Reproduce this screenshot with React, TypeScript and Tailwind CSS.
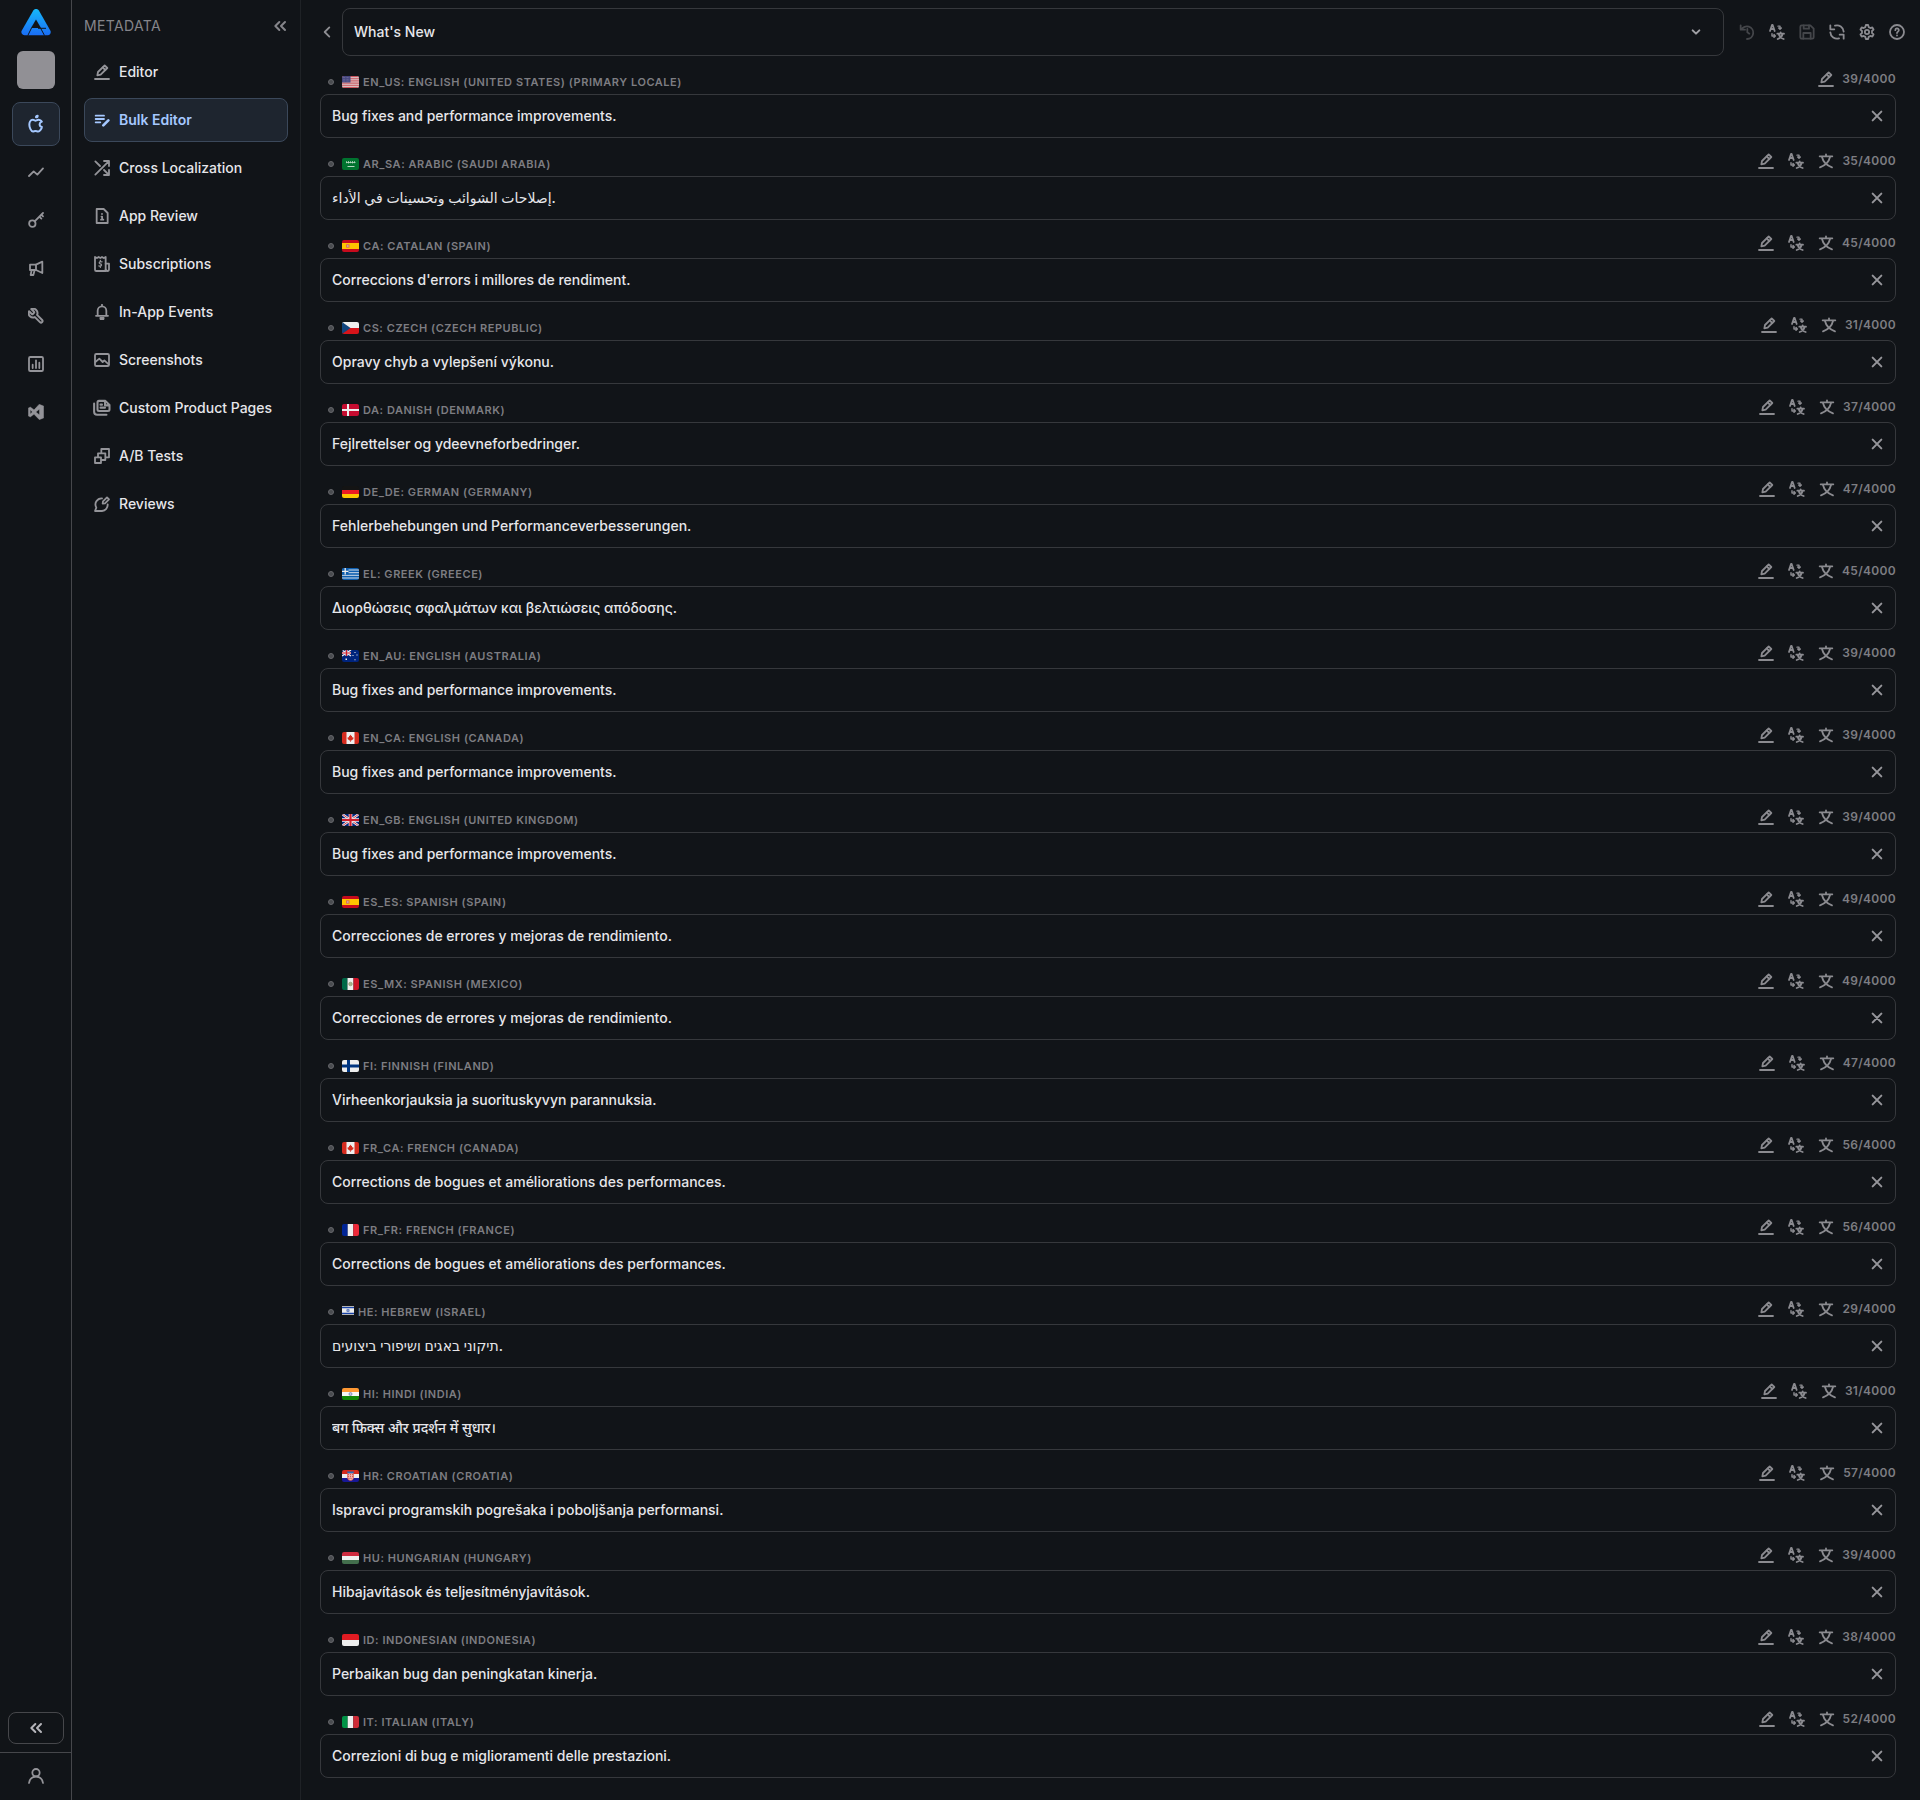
import { useState, type ReactNode } from "react";
import { TbBrandApple } from "react-icons/tb";

function Icon({ children, className = "size-4" }: { children: ReactNode; className?: string }) {
  return (
    <svg
      viewBox="0 0 24 24"
      fill="none"
      stroke="currentColor"
      strokeWidth="2.7"
      strokeLinecap="round"
      strokeLinejoin="round"
      className={className}
      aria-hidden="true"
    >
      {children}
    </svg>
  );
}

const PenIcon = () => (
  <Icon>
    <path d="M5 17l1-5L16 2l4 4L10 16z" />
    <path d="M13 5l4 4" />
    <path d="M1.5 22.5h21" />
  </Icon>
);

const TranslateAllIcon = () => (
  <Icon>
    <path d="M1.5 10.5L4.5 1.5h1L8.5 10.5M2.8 7.5h4.5" />
    <path d="M13.5 3.2h3V7M14.5 6l2 1.8 2-1.8" strokeWidth="2.2" />
    <path d="M4.5 14.5V18H9M7.5 15.8L9.5 18l-2 2" strokeWidth="2.2" />
    <path d="M12.5 14.5h10M17.5 12.5v2M20.5 15c-1 3.5-4 6.5-7.5 7.5M14.5 15c1 3.5 4 6.5 7.5 7.5" />
  </Icon>
);

const TranslateIcon = () => (
  <Icon>
    <path d="M2.5 5h19M12 2v3" />
    <path d="M18 6c-1.5 7-7 12.5-15 15.5M6 6c1.5 7 7 12.5 15 15.5" />
  </Icon>
);

const CloseIcon = () => (
  <Icon>
    <path d="M5.5 5.5l13 13M18.5 5.5l-13 13" strokeWidth="3" />
  </Icon>
);

const DoubleChevronLeft = () => (
  <Icon>
    <path d="M11 6l-6 6 6 6M19.5 6l-6 6 6 6" strokeWidth="3" />
  </Icon>
);

function Logo() {
  return (
    <svg viewBox="0 0 30 27" className="h-[27px] w-[30px]" aria-hidden="true">
      <defs>
        <linearGradient id="logo" x1="0" y1="0" x2="0" y2="1">
          <stop offset="0" stopColor="#16b9fb" />
          <stop offset="1" stopColor="#1a6df5" />
        </linearGradient>
      </defs>
      <path
        d="M12.3 1.5a3.3 3.3 0 0 1 5.6 0L29.3 21.4A3.3 3.3 0 0 1 26.5 26.3H3.5A3.3 3.3 0 0 1 .8 21.4z"
        fill="url(#logo)"
      />
      <path d="M15 10.5L10 19h10z" fill="#111418" />
      <path d="M10.5 19L6.8 26.5M19.5 19l4 7.500M17 19.300h8" stroke="#111418" strokeWidth="1" />
    </svg>
  );
}

const railItems = [
  {
    label: "Analytics",
    icon: <path d="M1.5 18l7-7 5.5 5L22.5 6.5" />,
  },
  {
    label: "Keywords",
    icon: (
      <>
        <circle cx="6.5" cy="17.5" r="4.8" />
        <path d="M10 14L22.5 1.5M17 7l3 3M20 4l2.5 2.5" />
      </>
    ),
  },
  {
    label: "Campaigns",
    icon: (
      <>
        <path d="M3 7h9l9.5-4.500v17L12 15H3z" />
        <path d="M12 7v8M5.5 15L4 22.5h4L10 15" />
      </>
    ),
  },
  {
    label: "Tools",
    icon: (
      <path
        transform="matrix(-1.1 0 0 1.1 25.2 -1.2)"
        d="M14.7 6.3a1 1 0 0 0 0 1.4l1.6 1.6a1 1 0 0 0 1.4 0l3.77-3.77a6 6 0 0 1-7.94 7.94l-6.91 6.91a2.12 2.12 0 0 1-3-3l6.91-6.91a6 6 0 0 1 7.94-7.94l-3.76 3.76z"
      />
    ),
  },
  {
    label: "Reports",
    icon: (
      <>
        <rect x="1.5" y="1.5" width="21" height="21" rx="2" />
        <path d="M7 18v-5M12 18V6.5M17 18v-8" />
      </>
    ),
  },
  {
    label: "Extensions",
    icon: (
      <path
        d="M17 .5L23.5 3v18L17 23.5 9 15.5 3.5 19.5.5 18V6l3-1.5L9 8.5zM17 8l-5 4 5 4zM3.5 9v6L6.3 12z"
        fill="currentColor"
        fillRule="evenodd"
        strokeWidth=".5"
      />
    ),
  },
];

const navItems = [
  { label: "Editor", icon: <PenIcon /> },
  {
    label: "Bulk Editor",
    active: true,
    icon: (
      <Icon>
        <path d="M2.5 5.5H15M2.5 10.5H15M2.5 15.5h7" />
        <path d="M14 20l7.5-7.5" strokeWidth="4" />
      </Icon>
    ),
  },
  {
    label: "Cross Localization",
    icon: (
      <Icon>
        <path d="M2 2l7 7M2 22L22 2M15 15l7 7M15 1.5h7.500V9M22.5 15v7.500H15" />
      </Icon>
    ),
  },
  {
    label: "App Review",
    icon: (
      <Icon>
        <path d="M4 1.5h10.500l6 6v15H4z" />
        <path d="M12 8.800v.2M11.200 12.800h1v4.500M10.500 17.500h3.500" />
      </Icon>
    ),
  },
  {
    label: "Subscriptions",
    icon: (
      <Icon>
        <path d="M1.5 1.5l3 1.5L7 1.5 9.5 3 12 1.5 14.5 3l3-1.500v21h-14a2 2 0 0 1-2-2z" />
        <path d="M17.5 11.5h5V20a2.5 2.5 0 0 1-5 0" />
        <path d="M12 8.800c-4-1.200-5.500 2.200-2.500 3s2 4.200-2.200 3M9.600 6.800v1.500M9.600 15.500v1.500" strokeWidth="2" />
      </Icon>
    ),
  },
  {
    label: "In-App Events",
    icon: (
      <Icon>
        <path d="M12 1v2M5.5 17.500V10a6.500 6.500 0 0 1 13 0v7.500M3 17.800h18" />
        <path d="M9.500 21a2.500 2.500 0 0 0 5 0z" fill="currentColor" />
      </Icon>
    ),
  },
  {
    label: "Screenshots",
    icon: (
      <Icon>
        <rect x="1.5" y="3" width="21" height="18" rx="2" />
        <path d="M2 15l6-5 5 5 2.500-2.500 6.500 6" />
      </Icon>
    ),
  },
  {
    label: "Custom Product Pages",
    icon: (
      <Icon className="size-[18px]">
        <path d="M8 2.500h8.500l5.500 5.500v6a2 2 0 0 1-2 2H8a2 2 0 0 1-2-2V4.500a2 2 0 0 1 2-2zM16 3v5.500h5.500" />
        <path d="M10 7.500h2M10 11.500h6M1.500 6v11a4 4 0 0 0 4 4H18" />
      </Icon>
    ),
  },
  {
    label: "A/B Tests",
    icon: (
      <Icon>
        <path d="M1.500 14h9v8.500h-9zM6 13.500V8h11v10h-6M11 7.500v-6h11.500V14h-5" />
      </Icon>
    ),
  },
  {
    label: "Reviews",
    icon: (
      <Icon>
        <path d="M12 3.500A9.300 9.300 0 0 0 3.500 17.500L1.500 22.500H12a9.300 9.300 0 0 0 8.500-10" />
        <path d="M13 11.500l.5-3.500 6-6 3 3-6 6z" />
      </Icon>
    ),
  },
];

const toolbarItems = [
  {
    label: "Undo",
    disabled: true,
    icon: (
      <Icon>
        <path d="M2.500 2v6.500H9M3.500 8.500A9.500 9.500 0 1 1 12 22.500M12.500 7.500v5l3 2" />
      </Icon>
    ),
  },
  { label: "Translate all", icon: <TranslateAllIcon /> },
  {
    label: "Save",
    disabled: true,
    icon: (
      <Icon>
        <path d="M4 2h13l5 5v13a2 2 0 0 1-2 2H4a2 2 0 0 1-2-2V4a2 2 0 0 1 2-2z" />
        <path d="M7 2v5h8V2M6.500 22v-8.500h11V22" />
      </Icon>
    ),
  },
  {
    label: "Refresh",
    icon: (
      <Icon>
        <path d="M9 2.500A10 10 0 0 1 22 11.500M15 21.500A10 10 0 0 1 2 12.500M2 2v6h6M22 22v-6h-6" />
      </Icon>
    ),
  },
  {
    label: "Settings",
    icon: (
      <Icon>
        <path d="M9.500 4.700l.8-3.200h3.400l.8 3.200 2.500 1.400 3-.9 1.800 3.100-2.300 2.200v3l2.300 2.200-1.800 3.100-3-.9-2.500 1.400-.8 3.200h-3.400l-.8-3.200L7 17.900l-3 .9-1.800-3.100 2.300-2.200v-3L2.200 8.300 4 5.200l3 .9z" />
        <circle cx="12" cy="12" r="3.2" />
      </Icon>
    ),
  },
  {
    label: "Help",
    icon: (
      <Icon>
        <circle cx="12" cy="12" r="10.5" />
        <path d="M9.500 9.300a2.600 2.600 0 1 1 3.800 2.300c-.9.500-1.300.9-1.300 1.900M12 17.200v.1" />
      </Icon>
    ),
  },
];

const flags: Record<string, ReactNode> = {
  us: (
    <>
      <path d="M0 0h17v12H0z" fill="#ddd5d7" />
      <path d="M0 .5h17M0 2.300h17M0 4.200h17M0 6h17M0 7.800h17M0 9.700h17M0 11.500h17" stroke="#c7464f" strokeWidth=".9" />
      <path d="M0 0h8.500v6.500H0z" fill="#46467f" />
      <path d="M1 1.500h7M1 3.300h7M1 5h7" stroke="#a9a9c4" strokeWidth=".5" strokeDasharray=".6 .8" />
    </>
  ),
  sa: (
    <>
      <path d="M0 0h17v12H0z" fill="#00732f" />
      <path d="M4 4.500h9.500M4.500 3.200v2M6.500 3v2.500M8.500 3.200v2M10.500 3v2.500M12.500 3.200v2" stroke="#b7d8c3" strokeWidth=".8" />
      <path d="M5.500 8.500h7" stroke="#e7f3eb" strokeWidth=".8" />
    </>
  ),
  es: (
    <>
      <path d="M0 0h17v12H0z" fill="#c60a1d" />
      <path d="M0 3h17v6H0z" fill="#ffc400" />
      <path d="M4 4.200h3.500v3.500H4z" fill="#e0714f" />
      <path d="M5 5h1.500v2H5z" fill="#c9a4a0" />
    </>
  ),
  cz: (
    <>
      <path d="M0 0h17v6H0z" fill="#eee" />
      <path d="M0 6h17v6H0z" fill="#d7141a" />
      <path d="M0 0l8.500 6L0 12z" fill="#11457e" />
    </>
  ),
  dk: (
    <>
      <path d="M0 0h17v12H0z" fill="#c60c30" />
      <path d="M6 0v12M0 6h17" stroke="#eee" strokeWidth="2" />
    </>
  ),
  de: (
    <>
      <path d="M0 0h17v4H0z" fill="#141414" />
      <path d="M0 4h17v4H0z" fill="#ed1c24" />
      <path d="M0 8h17v4H0z" fill="#fdc800" />
    </>
  ),
  gr: (
    <>
      <path d="M0 0h17v12H0z" fill="#0d5eaf" />
      <path d="M0 2h17M0 4.700h17M0 7.300h17M0 10h17" stroke="#d5deea" strokeWidth="1" />
      <path d="M0 0h6.500v6.500H0z" fill="#0d5eaf" />
      <path d="M3.200 0v6.500M0 3.300h6.500" stroke="#eee" strokeWidth="1.3" />
    </>
  ),
  au: (
    <>
      <path d="M0 0h17v12H0z" fill="#00247d" />
      <path d="M0 0l9 6M9 0L0 6" stroke="#eee" strokeWidth="1.4" />
      <path d="M4.500 0v6M0 3h9" stroke="#eee" strokeWidth="2.2" />
      <path d="M4.500 0v6M0 3h9" stroke="#cf1b2b" strokeWidth="1.2" />
      <path d="M3.500 8.500h1.500V10H3.500zM12.500 2h1v1h-1zM10.500 5h1v1h-1zM14.500 4.500h1v1h-1zM12.500 9.300h1v1h-1z" fill="#eee" />
    </>
  ),
  ca: (
    <>
      <path d="M0 0h17v12H0z" fill="#d52b1e" />
      <path d="M4.500 0h8v12h-8z" fill="#eee" />
      <path d="M8.500 2.500l.8 1.500.8-.3-.2 1.700 1.500-.4-.3 1.300.6.500-2.300 1.700h-.6V10h-.6V8.500h-.6L5.300 6.800l.6-.5-.3-1.300 1.500.4-.2-1.700.8.300z" fill="#d52b1e" />
    </>
  ),
  gb: (
    <>
      <path d="M0 0h17v12H0z" fill="#00247d" />
      <path d="M0 0l17 12M17 0L0 12" stroke="#eee" strokeWidth="2.4" />
      <path d="M0 0l17 12M17 0L0 12" stroke="#cf1b2b" strokeWidth=".8" />
      <path d="M8.500 0v12M0 6h17" stroke="#eee" strokeWidth="3.6" />
      <path d="M8.500 0v12M0 6h17" stroke="#cf1b2b" strokeWidth="2.2" />
    </>
  ),
  mx: (
    <>
      <path d="M0 0h5.500v12H0z" fill="#006847" />
      <path d="M5.500 0h6v12h-6z" fill="#eee" />
      <path d="M11.500 0H17v12h-5.500z" fill="#ce1126" />
      <circle cx="8.5" cy="6" r="1.8" fill="#a9ae8a" stroke="#8c9c6e" strokeWidth=".7" />
    </>
  ),
  fi: (
    <>
      <path d="M0 0h17v12H0z" fill="#eee" />
      <path d="M6.500 0v12M0 6h17" stroke="#003580" strokeWidth="3" />
    </>
  ),
  fr: (
    <>
      <path d="M0 0h5.700v12H0z" fill="#002495" />
      <path d="M5.700 0h5.600v12H5.700z" fill="#eee" />
      <path d="M11.300 0H17v12h-5.700z" fill="#ed2939" />
    </>
  ),
  il: (
    <>
      <path d="M0 0h17v12H0z" fill="#eee" />
      <path d="M0 2h17M0 10h17" stroke="#1741a6" strokeWidth="1.6" />
      <path d="M8.500 3.800l2 3.300h-4zM8.500 8.200l2-3.300h-4z" stroke="#1741a6" strokeWidth=".6" fill="none" />
    </>
  ),
  in: (
    <>
      <path d="M0 0h17v4H0z" fill="#ff9933" />
      <path d="M0 4h17v4H0z" fill="#f5f5f5" />
      <path d="M0 8h17v4H0z" fill="#128807" />
      <circle cx="8.5" cy="6" r="1.5" fill="#c0c4dc" stroke="#6a78b0" strokeWidth=".7" />
    </>
  ),
  hr: (
    <>
      <path d="M0 0h17v4H0z" fill="#d52b1e" />
      <path d="M0 4h17v4H0z" fill="#eee" />
      <path d="M0 8h17v4H0z" fill="#171796" />
      <path d="M5.500 3h6v4.500a3 3 0 0 1-6 0z" fill="#f0b6b2" stroke="#d9453a" strokeWidth=".6" />
      <path d="M6 4.700h5M6 6.700h5M6.500 8.500h4" stroke="#d9453a" strokeWidth="1" strokeDasharray="1 1" />
      <path d="M5 1.500h7l-.5 1.700h-6z" fill="#2a6cb8" />
    </>
  ),
  hu: (
    <>
      <path d="M0 0h17v4H0z" fill="#cd2a3e" />
      <path d="M0 4h17v4H0z" fill="#eee" />
      <path d="M0 8h17v4H0z" fill="#436f4d" />
    </>
  ),
  id: (
    <>
      <path d="M0 0h17v6H0z" fill="#e11b22" />
      <path d="M0 6h17v6H0z" fill="#eee" />
    </>
  ),
  it: (
    <>
      <path d="M0 0h5.700v12H0z" fill="#009246" />
      <path d="M5.700 0h5.600v12H5.700z" fill="#eee" />
      <path d="M11.300 0H17v12h-5.700z" fill="#ce2b37" />
    </>
  ),
};

const locales = [
  { flag: "us", name: "EN_US: English (United States) (Primary Locale)", text: "Bug fixes and performance improvements.", count: 39, primary: true },
  { flag: "sa", name: "AR_SA: Arabic (Saudi Arabia)", text: "إصلاحات الشوائب وتحسينات في الأداء.", count: 35 },
  { flag: "es", name: "CA: Catalan (Spain)", text: "Correccions d'errors i millores de rendiment.", count: 45 },
  { flag: "cz", name: "CS: Czech (Czech Republic)", text: "Opravy chyb a vylepšení výkonu.", count: 31 },
  { flag: "dk", name: "DA: Danish (Denmark)", text: "Fejlrettelser og ydeevneforbedringer.", count: 37 },
  { flag: "de", name: "DE_DE: German (Germany)", text: "Fehlerbehebungen und Performanceverbesserungen.", count: 47 },
  { flag: "gr", name: "EL: Greek (Greece)", text: "Διορθώσεις σφαλμάτων και βελτιώσεις απόδοσης.", count: 45 },
  { flag: "au", name: "EN_AU: English (Australia)", text: "Bug fixes and performance improvements.", count: 39 },
  { flag: "ca", name: "EN_CA: English (Canada)", text: "Bug fixes and performance improvements.", count: 39 },
  { flag: "gb", name: "EN_GB: English (United Kingdom)", text: "Bug fixes and performance improvements.", count: 39 },
  { flag: "es", name: "ES_ES: Spanish (Spain)", text: "Correcciones de errores y mejoras de rendimiento.", count: 49 },
  { flag: "mx", name: "ES_MX: Spanish (Mexico)", text: "Correcciones de errores y mejoras de rendimiento.", count: 49 },
  { flag: "fi", name: "FI: Finnish (Finland)", text: "Virheenkorjauksia ja suorituskyvyn parannuksia.", count: 47 },
  { flag: "ca", name: "FR_CA: French (Canada)", text: "Corrections de bogues et améliorations des performances.", count: 56 },
  { flag: "fr", name: "FR_FR: French (France)", text: "Corrections de bogues et améliorations des performances.", count: 56 },
  { flag: "il", name: "HE: Hebrew (Israel)", text: "תיקוני באגים ושיפורי ביצועים.", count: 29 },
  { flag: "in", name: "HI: Hindi (India)", text: "बग फिक्स और प्रदर्शन में सुधार।", count: 31 },
  { flag: "hr", name: "HR: Croatian (Croatia)", text: "Ispravci programskih pogrešaka i poboljšanja performansi.", count: 57 },
  { flag: "hu", name: "HU: Hungarian (Hungary)", text: "Hibajavítások és teljesítményjavítások.", count: 39 },
  { flag: "id", name: "ID: Indonesian (Indonesia)", text: "Perbaikan bug dan peningkatan kinerja.", count: 38 },
  { flag: "it", name: "IT: Italian (Italy)", text: "Correzioni di bug e miglioramenti delle prestazioni.", count: 52 },
];

type Locale = (typeof locales)[number];

function LocaleField({ locale }: { locale: Locale }) {
  const [value, setValue] = useState(locale.text);
  const id = locale.name.split(":")[0].toLowerCase();

  return (
    <div className="mb-2">
      <div className="flex h-[30px] items-center justify-between">
        <label
          htmlFor={id}
          className="flex items-center gap-1 pt-[6px] pl-2 text-[11px] leading-3 font-semibold tracking-wider text-[#7d7d82] uppercase"
        >
          <span className="mr-1 size-[6px] rounded-full border border-[#66676b] bg-[#4a4c50]" />
          <svg
            viewBox="0 0 17 12"
            className={locale.flag === "il" ? "mb-[3px] h-[9px] w-3" : "h-3 w-[17px] rounded-xs"}
            aria-hidden="true"
          >
            {flags[locale.flag]}
          </svg>
          {locale.name}
        </label>
        <div className="flex items-center gap-2 text-[#8b8b90]">
          <div className="flex items-center gap-[14px]">
            <button aria-label="Edit">
              <PenIcon />
            </button>
            {!locale.primary && (
              <>
                <button aria-label="Translate to all">
                  <TranslateAllIcon />
                </button>
                <button aria-label="Translate">
                  <TranslateIcon />
                </button>
              </>
            )}
          </div>
          <span className="text-xs font-semibold tracking-wide text-[#7d7d82]">{locale.count}/4000</span>
        </div>
      </div>
      <div className="flex h-11 items-center rounded-lg border border-[#36383c] px-[10px]">
        <input
          id={id}
          value={value}
          onChange={(e) => setValue(e.target.value)}
          className="h-full min-w-0 flex-1 bg-transparent pb-0.5 pl-px text-sm font-medium text-[#e6e6ea] outline-none"
        />
        <button aria-label="Clear" onClick={() => setValue("")} className="text-[#96969b]">
          <CloseIcon />
        </button>
      </div>
    </div>
  );
}

export default function App() {
  return (
    <div className="flex min-h-screen bg-[#111418] font-['Inter','Noto_Sans','DejaVu_Sans',sans-serif] text-[#e6e6ea]">
      <aside className="flex w-[72px] shrink-0 flex-col items-center border-r border-[#46474b] text-[#949499]">
        <div className="flex h-11 items-center">
          <Logo />
        </div>
        <div className="mt-[7px] size-[38px] rounded-md bg-[#919095]" />
        <nav className="mt-[13px] flex flex-col gap-1">
          <a
            href="#"
            aria-label="App Store"
            className="flex h-11 w-12 items-center justify-center rounded-lg border border-[#3b485a] bg-[#1e252f] text-[#a5c8ff]"
          >
            <TbBrandApple className="size-5" strokeWidth={2.4} />
          </a>
          {railItems.map(({ label, icon }) => (
            <a key={label} href="#" aria-label={label} className="flex h-11 w-12 items-center justify-center">
              <Icon>{icon}</Icon>
            </a>
          ))}
        </nav>
        <button
          aria-label="Collapse"
          className="mt-auto mb-2 flex h-8 w-14 items-center justify-center rounded-lg border border-[#46474b] text-[#b5b5ba]"
        >
          <DoubleChevronLeft />
        </button>
        <button
          aria-label="Account"
          className="flex h-12 w-full items-center justify-center border-t border-[#46474b] pb-0.5"
        >
          <Icon>
            <circle cx="12" cy="7" r="5.5" />
            <path d="M1.5 22.5C3 9.5 21 9.5 22.5 22.5" />
          </Icon>
        </button>
      </aside>

      <aside className="w-[229px] shrink-0 border-r border-[#1f2226] px-3">
        <div className="flex h-[50px] items-center justify-between pt-0.5 text-[#85858a]">
          <h2 className="text-sm tracking-wide">METADATA</h2>
          <button aria-label="Collapse sidebar">
            <DoubleChevronLeft />
          </button>
        </div>
        <nav className="flex flex-col gap-1">
          {navItems.map(({ label, icon, active }) => (
            <a
              key={label}
              href="#"
              className={
                active
                  ? "flex h-11 items-center gap-2 rounded-lg border border-[#3b485a] bg-[#1e252f] px-2 text-sm font-semibold text-[#a5c8ff]"
                  : "flex h-11 items-center gap-2 rounded-lg border border-transparent px-2 text-sm font-medium whitespace-nowrap"
              }
            >
              <span className={active ? "flex w-[18px] justify-center" : "flex w-[18px] justify-center text-[#949499]"}>
                {icon}
              </span>
              {label}
            </a>
          ))}
        </nav>
      </aside>

      <main className="min-w-0 flex-1">
        <header className="flex h-16 items-center pr-[15px] pl-[18px]">
          <button aria-label="Back" className="mr-[7px] text-[#8e8e93]">
            <Icon>
              <path d="M15.5 5l-7 7 7 7" />
            </Icon>
          </button>
          <div className="grid flex-1 items-center">
            <select
              aria-label="Field"
              className="col-start-1 row-start-1 h-12 appearance-none rounded-lg border border-[#36383c] bg-transparent px-[11px] text-sm font-medium outline-none"
            >
              <option>What's New</option>
            </select>
            <span className="pointer-events-none col-start-1 row-start-1 mr-5 justify-self-end text-[#a0a0a5]">
              <Icon>
                <path d="M7 9.5l5 5 5-5" strokeWidth="3" />
              </Icon>
            </span>
          </div>
          <div className="ml-[15px] flex items-center gap-[14px] text-[#8b8b90]">
            {toolbarItems.map(({ label, icon, disabled }) => (
              <button key={label} aria-label={label} disabled={disabled} className="disabled:text-[#44464a]">
                {icon}
              </button>
            ))}
          </div>
        </header>
        <div className="pr-6 pl-[19px]">
          {locales.map((locale) => (
            <LocaleField key={locale.name} locale={locale} />
          ))}
        </div>
      </main>
    </div>
  );
}
